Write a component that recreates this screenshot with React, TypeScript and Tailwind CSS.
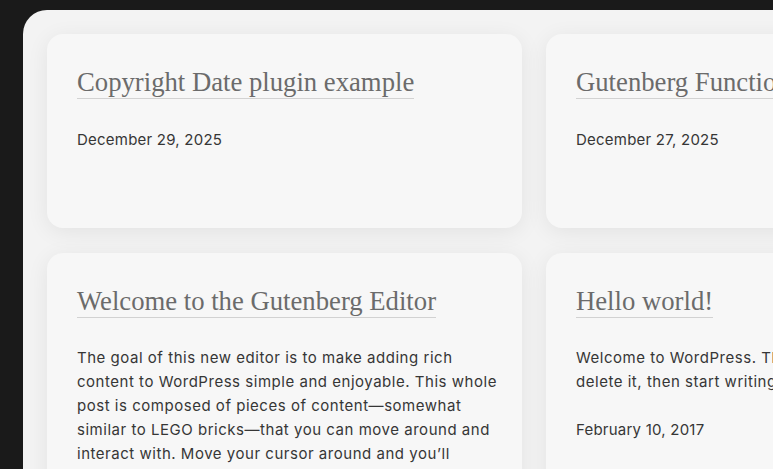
import React from "react";

type Post = {
  title: string;
  excerpt?: string;
  date: string;
};

const posts: Post[] = [
  { title: "Copyright Date plugin example", date: "December 29, 2025" },
  { title: "Gutenberg Functions and Patterns", date: "December 27, 2025" },
  {
    title: "Welcome to the Gutenberg Editor",
    excerpt:
      "The goal of this new editor is to make adding rich content to WordPress simple and enjoyable. This whole post is composed of pieces of content\u2014somewhat similar to LEGO bricks\u2014that you can move around and interact with. Move your cursor around and you\u2019ll notice the different blocks light up with outlines and arrows.",
    date: "January 12, 2018",
  },
  {
    title: "Hello world!",
    excerpt:
      "Welcome to WordPress. This is your first post. Edit or delete it, then start writing!",
    date: "February 10, 2017",
  },
];

function PostCard({ post }: { post: Post }) {
  return (
    <article className="min-h-[194px] rounded-2xl bg-[#f7f7f7] pl-[30px] pr-[22px] pt-[32px] pb-[30px] shadow-[0_4px_22px_rgba(0,0,0,0.07)]">
      <h2 className="whitespace-nowrap">
        <a className="inline-block border-b border-[#d2d2d2] font-['Liberation_Serif',serif] text-[26.7px] leading-[32px] text-[#6b6b6b]">
          {post.title}
        </a>
      </h2>
      {post.excerpt && (
        <p className="mt-[28px] text-[15px] leading-[24px] tracking-[0.035em] text-[#363636]">
          {post.excerpt}
        </p>
      )}
      <div
        className={`${post.excerpt ? "mt-[24px]" : "mt-[29px]"} text-[15px] leading-[24px] tracking-[0.015em] text-[#363636]`}
      >
        {post.date}
      </div>
    </article>
  );
}

export default function App() {
  return (
    <div className="h-[469px] w-full overflow-hidden bg-[#1a1a1a] pl-[23px] pt-[10px] font-['Inter',sans-serif]">
      <main className="h-[900px] w-[1200px] rounded-tl-[24px] bg-[#f3f3f3] p-[24px]">
        <div className="grid grid-cols-[475px_475px] gap-x-[24px] gap-y-[25px]">
          {posts.map((post) => (
            <PostCard key={post.title} post={post} />
          ))}
        </div>
      </main>
    </div>
  );
}
